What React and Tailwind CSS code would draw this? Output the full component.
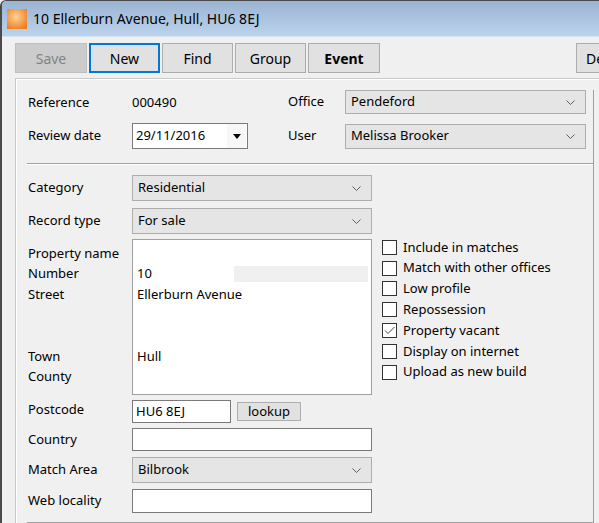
import React from 'react';

const Chevron = () => (
  <svg width="9" height="5" viewBox="0 0 9 5" className="shrink-0">
    <path d="M0.5 0.5 L4.5 4.5 L8.5 0.5" fill="none" stroke="#5f5f5f" strokeWidth="1" />
  </svg>
);

const Combo = ({ value, className }) => (
  <div className={`flex items-center justify-between bg-[#e5e5e5] border border-[#adadad] pl-[5px] pr-[10px] ${className}`}>
    <span>{value}</span>
    <Chevron />
  </div>
);

const TextBox = ({ value, className }) => (
  <div className={`flex items-center bg-white border border-[#7a7a7a] pl-[3px] ${className}`}>{value}</div>
);

const Button = ({ children, className }) => (
  <div className={`shrink-0 flex items-center justify-center h-[30px] text-[14px] ${className}`}>{children}</div>
);

const Separator = () => (
  <div className="ml-[-1px] h-[2px] border-t border-[#a0a0a0] border-b border-b-white" />
);

const AppIcon = () => (
  <svg width="20" height="20" viewBox="0 0 20 20" className="shrink-0">
    <defs>
      <radialGradient id="appIconFill" cx="45%" cy="40%" r="70%">
        <stop offset="0%" stopColor="#ffd394" />
        <stop offset="100%" stopColor="#ec7a1e" />
      </radialGradient>
    </defs>
    <rect x="0" y="0" width="20" height="20" fill="url(#appIconFill)" />
  </svg>
);

const Checkbox = ({ label, checked }) => (
  <div className="flex items-center gap-[6px] h-[20.8px]">
    <div className="w-[15px] h-[15px] border border-[#333] bg-white flex items-center justify-center">
      {checked && (
        <svg width="13" height="13" viewBox="0 0 13 13">
          <path d="M2 6.5 L5 9.5 L11.5 3" fill="none" stroke="#444" strokeWidth="1" />
        </svg>
      )}
    </div>
    <span>{label}</span>
  </div>
);

const addressLabels = ['Property name', 'Number', 'Street', '', '', 'Town', 'County'];

const flags = [
  { label: 'Include in matches' },
  { label: 'Match with other offices' },
  { label: 'Low profile' },
  { label: 'Repossession' },
  { label: 'Property vacant', checked: true },
  { label: 'Display on internet' },
  { label: 'Upload as new build' },
];

export default function App() {
  return (
    <div className="w-[599px] h-[523px] overflow-hidden bg-[#f0f0f0] text-[13px] text-black font-['Noto_Sans',sans-serif]">
      <div className="h-full flex flex-col border-l-2 border-t border-[#4a4a4a] rounded-tl-[6px] overflow-hidden">
        {/* Title bar */}
        <div className="h-[35px] shrink-0 flex items-center gap-[6px] pl-[5px] bg-linear-to-b from-[#9ab4d3] to-[#bcd3eb]">
          <AppIcon />
          <span className="text-[14px] leading-none">10 Ellerburn Avenue, Hull, HU6 8EJ</span>
        </div>

        <div className="flex-1 flex flex-col pt-[6px] border-t border-[#d6e2ef]">
          {/* Toolbar */}
          <div className="flex gap-[2px] pl-[13px] overflow-hidden">
            <Button className="w-[72px] bg-[#cccccc] border border-[#bfbfbf] text-[#838383]">Save</Button>
            <Button className="w-[71px] bg-[#e1e1e1] border-2 border-[#0078d7]">New</Button>
            <Button className="w-[71px] bg-[#e1e1e1] border border-[#adadad]">Find</Button>
            <Button className="w-[71px] bg-[#e1e1e1] border border-[#adadad]">Group</Button>
            <Button className="w-[72px] bg-[#e1e1e1] border border-[#adadad] font-bold">Event</Button>
            <Button className="w-[72px] ml-[194px] bg-[#e1e1e1] border border-[#adadad] justify-start pl-[9px]">Delete</Button>
          </div>

          {/* Record panel */}
          <div className="flex-1 mt-[5px] ml-[13px] pt-[11px] border-t border-l border-[#c9c9c9] shadow-[inset_1px_1px_0_#ffffff]">
            <div className="w-[578px] h-full pl-[12px] border-r border-[#a0a0a0]">
              <div className="flex items-center h-[24px]">
                <span className="w-[104px] pt-[2px]">Reference</span>
                <span className="w-[156px] pt-[2px]">000490</span>
                <span className="w-[57px]">Office</span>
                <Combo value="Pendeford" className="w-[241px] h-[24px]" />
              </div>
              <div className="flex items-center h-[26px] mt-[9px]">
                <span className="w-[104px]">Review date</span>
                <div className="w-[116px] h-[26px] flex items-center bg-white border border-[#7a7a7a] pl-[3px]">
                  <span className="flex-1">29/11/2016</span>
                  <div className="w-[19px] h-full flex items-center justify-center bg-[#f7f7f7] mr-[1px]">
                    <svg width="8" height="5" viewBox="0 0 8 5">
                      <path d="M0 0 L8 0 L4 5 Z" fill="#000" />
                    </svg>
                  </div>
                </div>
                <span className="w-[40px]" />
                <span className="w-[57px]">User</span>
                <Combo value="Melissa Brooker" className="w-[241px] h-[25px]" />
              </div>

              <div className="mt-[14px]">
                <Separator />
              </div>

              <div className="flex items-center h-[26px] mt-[10px]">
                <span className="w-[104px]">Category</span>
                <Combo value="Residential" className="w-[240px] h-[26px]" />
              </div>
              <div className="flex items-center h-[26px] mt-[7px]">
                <span className="w-[104px]">Record type</span>
                <Combo value="For sale" className="w-[240px] h-[26px]" />
              </div>

              {/* Address block with flags */}
              <div className="flex mt-[5px]">
                <div className="w-[104px] pt-[4px]">
                  {addressLabels.map((l, i) => (
                    <div key={i} className="h-[20.6px] flex items-center">{l}</div>
                  ))}
                </div>
                <div className="w-[240px] h-[156px] bg-white border border-[#a0a0a0] pt-[3px] pl-[4px] pr-[3px]">
                  <div className="h-[20.6px]" />
                  <div className="h-[20.6px] flex items-center">
                    <span>10</span>
                    <div className="ml-auto w-[134px] h-[16px] bg-[#f0f0f0]" />
                  </div>
                  <div className="h-[20.6px] flex items-center">Ellerburn Avenue</div>
                  <div className="h-[20.6px]" />
                  <div className="h-[20.6px]" />
                  <div className="h-[20.6px] flex items-center">Hull</div>
                </div>
                <div className="ml-[10px] mt-[-2px]">
                  {flags.map((f) => (
                    <Checkbox key={f.label} label={f.label} checked={f.checked} />
                  ))}
                </div>
              </div>

              <div className="flex items-center h-[23px] mt-[5px]">
                <span className="w-[104px] mt-[-3px]">Postcode</span>
                <TextBox value="HU6 8EJ" className="w-[99px] h-[23px]" />
                <div className="ml-[6px] w-[64px] h-[19px] flex items-center justify-center bg-[#e1e1e1] border border-[#adadad]">lookup</div>
              </div>
              <div className="flex items-center h-[23px] mt-[5px]">
                <span className="w-[104px]">Country</span>
                <TextBox value="" className="w-[240px] h-[23px]" />
              </div>
              <div className="flex items-center h-[26px] mt-[6px]">
                <span className="w-[104px]">Match Area</span>
                <Combo value="Bilbrook" className="w-[240px] h-[26px]" />
              </div>
              <div className="flex items-center h-[24px] mt-[6px]">
                <span className="w-[104px]">Web locality</span>
                <TextBox value="" className="w-[240px] h-[24px]" />
              </div>

              <div className="mt-[9px]">
                <Separator />
              </div>
            </div>
          </div>
        </div>
      </div>
    </div>
  );
}
